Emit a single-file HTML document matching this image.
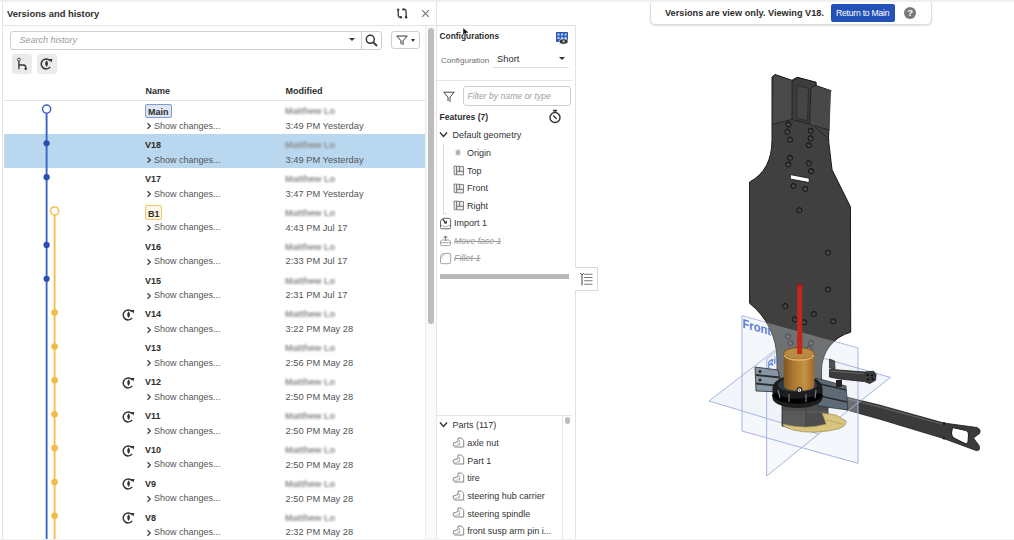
<!DOCTYPE html>
<html><head><meta charset="utf-8"><style>
html,body{margin:0;padding:0}
body{width:1014px;height:540px;overflow:hidden;position:relative;background:#fff;font-family:"Liberation Sans",sans-serif}
.t{position:absolute;white-space:nowrap;line-height:1}
svg{overflow:visible}
</style></head><body>
<div style="position:absolute;left:2.2px;top:1.5px;width:1.3px;height:538.5px;background:#e4e4e4"></div><div class="t" style="left:7px;top:9.24px;font-size:9.4px;font-weight:bold;color:#2e2e2e;font-style:normal;">Versions and history</div>
<svg style="position:absolute;left:396px;top:8px" width="13" height="12" viewBox="0 0 13 12"><path d="M2.2 1.6 V7.6 Q2.2 9.3 4 9.3 H4.8 M7.5 1.4 H8.4 Q10.1 1.4 10.1 3.2 V9.3" stroke="#333" stroke-width="1.3" fill="none"/><circle cx="2.2" cy="1.6" r="1.2" fill="#333"/><circle cx="4.9" cy="9.3" r="1.2" fill="#333"/><circle cx="7.5" cy="1.4" r="1.2" fill="#333"/><circle cx="10.1" cy="9.3" r="1.2" fill="#333"/></svg><svg style="position:absolute;left:421px;top:9.3px" width="9" height="9" viewBox="0 0 9 9"><path d="M1.2 1.2 L7.8 7.8 M7.8 1.2 L1.2 7.8" stroke="#777" stroke-width="1.2"/></svg><div style="position:absolute;left:3px;top:25px;width:433px;height:1px;background:#e4e4e4"></div><div style="position:absolute;left:436px;top:2px;width:1px;height:538px;background:#e4e4e4"></div><div style="position:absolute;left:10px;top:30.5px;width:370px;height:17px;border:1px solid #cfcfcf;border-radius:3px;background:#fff"></div><div class="t" style="left:19.5px;top:35.68px;font-size:9px;font-weight:normal;color:#9a9a9a;font-style:italic;">Search history</div>
<div style="position:absolute;left:349px;top:37.5px;width:0;height:0;border-left:3px solid transparent;border-right:3px solid transparent;border-top:3.5px solid #333"></div><div style="position:absolute;left:361px;top:31px;width:1px;height:18px;background:#d0d0d0"></div><svg style="position:absolute;left:365px;top:34px" width="13" height="13" viewBox="0 0 13 13"><circle cx="5.3" cy="5.3" r="4" stroke="#333" stroke-width="1.5" fill="none"/><path d="M8.2 8.2 L12 12" stroke="#333" stroke-width="1.8"/></svg><div style="position:absolute;left:391px;top:30.5px;width:27px;height:16.5px;border:1px solid #cfcfcf;border-radius:3px;background:#fff"></div><svg style="position:absolute;left:396px;top:34.5px" width="12" height="11" viewBox="0 0 12 11"><path d="M0.8 1 H11.2 L7 5.8 V10 M0.8 1 L5 5.8 V9.2" stroke="#333" stroke-width="1" fill="none" stroke-linejoin="round"/></svg><div style="position:absolute;left:411px;top:38.5px;width:0;height:0;border-left:2.8px solid transparent;border-right:2.8px solid transparent;border-top:3.2px solid #333"></div><div style="position:absolute;left:12px;top:54px;width:20px;height:20px;border-radius:3px;background:#ebebeb"></div><div style="position:absolute;left:36.5px;top:54px;width:20px;height:20px;border-radius:3px;background:#ebebeb"></div><svg style="position:absolute;left:15px;top:57px" width="14" height="14" viewBox="0 0 14 14"><circle cx="3.9" cy="2.6" r="1.5" stroke="#333" stroke-width="0.9" fill="none"/><path d="M3.9 4.1 V12.3 M3.9 8 H8.6 Q10.7 8 10.7 10.3 V11.5" stroke="#333" stroke-width="1.3" fill="none"/><circle cx="10.7" cy="11.8" r="1.25" fill="#333"/></svg><svg style="position:absolute;left:39.5px;top:57.3px" width="13" height="13" viewBox="0 0 13 13"><path d="M10.2 3.9 A5 5 0 1 0 10.2 9.9" stroke="#333" stroke-width="1.5" fill="none"/><path d="M8.8 2 L12.3 1.9 L11.6 5.4 Z" fill="#333"/><path d="M6.6 3.3 Q9.4 6.6 6.6 10.1 Q3.8 6.6 6.6 3.3 Z" fill="#333"/></svg><div class="t" style="left:145.4px;top:86.68px;font-size:9px;font-weight:bold;color:#2e2e2e;font-style:normal;">Name</div>
<div class="t" style="left:285.5px;top:86.68px;font-size:9px;font-weight:bold;color:#2e2e2e;font-style:normal;">Modified</div>
<div style="position:absolute;left:4px;top:100px;width:422px;height:1px;background:#e2e2e2"></div><div style="position:absolute;left:145px;top:103.8px;width:24.5px;height:12.5px;border:1px solid #7d9bd6;background:#dfe6f2;border-radius:2px"></div><div class="t" style="left:148px;top:107.98px;font-size:9px;font-weight:bold;color:#2e2e2e;font-style:normal;">Main</div>
<svg style="position:absolute;left:145.5px;top:122.3px" width="6" height="8" viewBox="0 0 6 8"><path d="M1.5 1.2 L4.3 4 L1.5 6.8" stroke="#444" stroke-width="1.3" fill="none"/></svg><div class="t" style="left:154px;top:121.78px;font-size:9px;font-weight:normal;color:#555;font-style:normal;">Show changes...</div>
<div class="t" style="left:285px;top:107.23px;font-size:9.3px;font-weight:bold;color:#8c8c8c;font-style:normal;filter:blur(1.25px);letter-spacing:-0.1px;">Matthew Lo</div>
<div class="t" style="left:285.5px;top:121.93px;font-size:9.3px;font-weight:normal;color:#555;font-style:normal;">3:49 PM Yesterday</div>
<div style="position:absolute;left:4px;top:134.36999999999998px;width:422px;height:33.5px;background:#b9d8f0"></div><div class="t" style="left:145px;top:141.05px;font-size:9px;font-weight:bold;color:#2e2e2e;font-style:normal;">V18</div>
<svg style="position:absolute;left:145.5px;top:156.17px" width="6" height="8" viewBox="0 0 6 8"><path d="M1.5 1.2 L4.3 4 L1.5 6.8" stroke="#444" stroke-width="1.3" fill="none"/></svg><div class="t" style="left:154px;top:155.65px;font-size:9px;font-weight:normal;color:#555;font-style:normal;">Show changes...</div>
<div class="t" style="left:285px;top:141.10px;font-size:9.3px;font-weight:bold;color:#8c8c8c;font-style:normal;filter:blur(1.25px);letter-spacing:-0.1px;">Matthew Lo</div>
<div class="t" style="left:285.5px;top:155.80px;font-size:9.3px;font-weight:normal;color:#555;font-style:normal;">3:49 PM Yesterday</div>
<div class="t" style="left:145px;top:174.92px;font-size:9px;font-weight:bold;color:#2e2e2e;font-style:normal;">V17</div>
<svg style="position:absolute;left:145.5px;top:190.04px" width="6" height="8" viewBox="0 0 6 8"><path d="M1.5 1.2 L4.3 4 L1.5 6.8" stroke="#444" stroke-width="1.3" fill="none"/></svg><div class="t" style="left:154px;top:189.52px;font-size:9px;font-weight:normal;color:#555;font-style:normal;">Show changes...</div>
<div class="t" style="left:285px;top:174.97px;font-size:9.3px;font-weight:bold;color:#8c8c8c;font-style:normal;filter:blur(1.25px);letter-spacing:-0.1px;">Matthew Lo</div>
<div class="t" style="left:285.5px;top:189.67px;font-size:9.3px;font-weight:normal;color:#555;font-style:normal;">3:47 PM Yesterday</div>
<div style="position:absolute;left:145px;top:205.41px;width:14.5px;height:12.5px;border:1px solid #f2c96a;background:#fdf6e4;border-radius:2px"></div><div class="t" style="left:148px;top:209.59px;font-size:9px;font-weight:bold;color:#2e2e2e;font-style:normal;">B1</div>
<svg style="position:absolute;left:145.5px;top:223.91px" width="6" height="8" viewBox="0 0 6 8"><path d="M1.5 1.2 L4.3 4 L1.5 6.8" stroke="#444" stroke-width="1.3" fill="none"/></svg><div class="t" style="left:154px;top:223.39px;font-size:9px;font-weight:normal;color:#555;font-style:normal;">Show changes...</div>
<div class="t" style="left:285px;top:208.84px;font-size:9.3px;font-weight:bold;color:#8c8c8c;font-style:normal;filter:blur(1.25px);letter-spacing:-0.1px;">Matthew Lo</div>
<div class="t" style="left:285.5px;top:223.54px;font-size:9.3px;font-weight:normal;color:#555;font-style:normal;">4:43 PM Jul 17</div>
<div class="t" style="left:145px;top:242.66px;font-size:9px;font-weight:bold;color:#2e2e2e;font-style:normal;">V16</div>
<svg style="position:absolute;left:145.5px;top:257.78px" width="6" height="8" viewBox="0 0 6 8"><path d="M1.5 1.2 L4.3 4 L1.5 6.8" stroke="#444" stroke-width="1.3" fill="none"/></svg><div class="t" style="left:154px;top:257.26px;font-size:9px;font-weight:normal;color:#555;font-style:normal;">Show changes...</div>
<div class="t" style="left:285px;top:242.71px;font-size:9.3px;font-weight:bold;color:#8c8c8c;font-style:normal;filter:blur(1.25px);letter-spacing:-0.1px;">Matthew Lo</div>
<div class="t" style="left:285.5px;top:257.41px;font-size:9.3px;font-weight:normal;color:#555;font-style:normal;">2:33 PM Jul 17</div>
<div class="t" style="left:145px;top:276.53px;font-size:9px;font-weight:bold;color:#2e2e2e;font-style:normal;">V15</div>
<svg style="position:absolute;left:145.5px;top:291.65px" width="6" height="8" viewBox="0 0 6 8"><path d="M1.5 1.2 L4.3 4 L1.5 6.8" stroke="#444" stroke-width="1.3" fill="none"/></svg><div class="t" style="left:154px;top:291.13px;font-size:9px;font-weight:normal;color:#555;font-style:normal;">Show changes...</div>
<div class="t" style="left:285px;top:276.58px;font-size:9.3px;font-weight:bold;color:#8c8c8c;font-style:normal;filter:blur(1.25px);letter-spacing:-0.1px;">Matthew Lo</div>
<div class="t" style="left:285.5px;top:291.28px;font-size:9.3px;font-weight:normal;color:#555;font-style:normal;">2:31 PM Jul 17</div>
<div class="t" style="left:145px;top:310.40px;font-size:9px;font-weight:bold;color:#2e2e2e;font-style:normal;">V14</div>
<svg style="position:absolute;left:145.5px;top:325.52px" width="6" height="8" viewBox="0 0 6 8"><path d="M1.5 1.2 L4.3 4 L1.5 6.8" stroke="#444" stroke-width="1.3" fill="none"/></svg><div class="t" style="left:154px;top:325.00px;font-size:9px;font-weight:normal;color:#555;font-style:normal;">Show changes...</div>
<div class="t" style="left:285px;top:310.45px;font-size:9.3px;font-weight:bold;color:#8c8c8c;font-style:normal;filter:blur(1.25px);letter-spacing:-0.1px;">Matthew Lo</div>
<div class="t" style="left:285.5px;top:325.15px;font-size:9.3px;font-weight:normal;color:#555;font-style:normal;">3:22 PM May 28</div>
<svg style="position:absolute;left:121.5px;top:308.02px" width="13" height="13" viewBox="0 0 13 13"><path d="M10.2 3.9 A5 5 0 1 0 10.2 9.9" stroke="#333" stroke-width="1.5" fill="none"/><path d="M8.8 2 L12.3 1.9 L11.6 5.4 Z" fill="#333"/><path d="M6.6 3.3 Q9.4 6.6 6.6 10.1 Q3.8 6.6 6.6 3.3 Z" fill="#333"/></svg><div class="t" style="left:145px;top:344.27px;font-size:9px;font-weight:bold;color:#2e2e2e;font-style:normal;">V13</div>
<svg style="position:absolute;left:145.5px;top:359.39px" width="6" height="8" viewBox="0 0 6 8"><path d="M1.5 1.2 L4.3 4 L1.5 6.8" stroke="#444" stroke-width="1.3" fill="none"/></svg><div class="t" style="left:154px;top:358.87px;font-size:9px;font-weight:normal;color:#555;font-style:normal;">Show changes...</div>
<div class="t" style="left:285px;top:344.32px;font-size:9.3px;font-weight:bold;color:#8c8c8c;font-style:normal;filter:blur(1.25px);letter-spacing:-0.1px;">Matthew Lo</div>
<div class="t" style="left:285.5px;top:359.02px;font-size:9.3px;font-weight:normal;color:#555;font-style:normal;">2:56 PM May 28</div>
<div class="t" style="left:145px;top:378.14px;font-size:9px;font-weight:bold;color:#2e2e2e;font-style:normal;">V12</div>
<svg style="position:absolute;left:145.5px;top:393.26px" width="6" height="8" viewBox="0 0 6 8"><path d="M1.5 1.2 L4.3 4 L1.5 6.8" stroke="#444" stroke-width="1.3" fill="none"/></svg><div class="t" style="left:154px;top:392.74px;font-size:9px;font-weight:normal;color:#555;font-style:normal;">Show changes...</div>
<div class="t" style="left:285px;top:378.19px;font-size:9.3px;font-weight:bold;color:#8c8c8c;font-style:normal;filter:blur(1.25px);letter-spacing:-0.1px;">Matthew Lo</div>
<div class="t" style="left:285.5px;top:392.89px;font-size:9.3px;font-weight:normal;color:#555;font-style:normal;">2:50 PM May 28</div>
<svg style="position:absolute;left:121.5px;top:375.76px" width="13" height="13" viewBox="0 0 13 13"><path d="M10.2 3.9 A5 5 0 1 0 10.2 9.9" stroke="#333" stroke-width="1.5" fill="none"/><path d="M8.8 2 L12.3 1.9 L11.6 5.4 Z" fill="#333"/><path d="M6.6 3.3 Q9.4 6.6 6.6 10.1 Q3.8 6.6 6.6 3.3 Z" fill="#333"/></svg><div class="t" style="left:145px;top:412.01px;font-size:9px;font-weight:bold;color:#2e2e2e;font-style:normal;">V11</div>
<svg style="position:absolute;left:145.5px;top:427.13px" width="6" height="8" viewBox="0 0 6 8"><path d="M1.5 1.2 L4.3 4 L1.5 6.8" stroke="#444" stroke-width="1.3" fill="none"/></svg><div class="t" style="left:154px;top:426.61px;font-size:9px;font-weight:normal;color:#555;font-style:normal;">Show changes...</div>
<div class="t" style="left:285px;top:412.06px;font-size:9.3px;font-weight:bold;color:#8c8c8c;font-style:normal;filter:blur(1.25px);letter-spacing:-0.1px;">Matthew Lo</div>
<div class="t" style="left:285.5px;top:426.76px;font-size:9.3px;font-weight:normal;color:#555;font-style:normal;">2:50 PM May 28</div>
<svg style="position:absolute;left:121.5px;top:409.63px" width="13" height="13" viewBox="0 0 13 13"><path d="M10.2 3.9 A5 5 0 1 0 10.2 9.9" stroke="#333" stroke-width="1.5" fill="none"/><path d="M8.8 2 L12.3 1.9 L11.6 5.4 Z" fill="#333"/><path d="M6.6 3.3 Q9.4 6.6 6.6 10.1 Q3.8 6.6 6.6 3.3 Z" fill="#333"/></svg><div class="t" style="left:145px;top:445.88px;font-size:9px;font-weight:bold;color:#2e2e2e;font-style:normal;">V10</div>
<svg style="position:absolute;left:145.5px;top:461.0px" width="6" height="8" viewBox="0 0 6 8"><path d="M1.5 1.2 L4.3 4 L1.5 6.8" stroke="#444" stroke-width="1.3" fill="none"/></svg><div class="t" style="left:154px;top:460.48px;font-size:9px;font-weight:normal;color:#555;font-style:normal;">Show changes...</div>
<div class="t" style="left:285px;top:445.93px;font-size:9.3px;font-weight:bold;color:#8c8c8c;font-style:normal;filter:blur(1.25px);letter-spacing:-0.1px;">Matthew Lo</div>
<div class="t" style="left:285.5px;top:460.63px;font-size:9.3px;font-weight:normal;color:#555;font-style:normal;">2:50 PM May 28</div>
<svg style="position:absolute;left:121.5px;top:443.5px" width="13" height="13" viewBox="0 0 13 13"><path d="M10.2 3.9 A5 5 0 1 0 10.2 9.9" stroke="#333" stroke-width="1.5" fill="none"/><path d="M8.8 2 L12.3 1.9 L11.6 5.4 Z" fill="#333"/><path d="M6.6 3.3 Q9.4 6.6 6.6 10.1 Q3.8 6.6 6.6 3.3 Z" fill="#333"/></svg><div class="t" style="left:145px;top:479.75px;font-size:9px;font-weight:bold;color:#2e2e2e;font-style:normal;">V9</div>
<svg style="position:absolute;left:145.5px;top:494.87px" width="6" height="8" viewBox="0 0 6 8"><path d="M1.5 1.2 L4.3 4 L1.5 6.8" stroke="#444" stroke-width="1.3" fill="none"/></svg><div class="t" style="left:154px;top:494.35px;font-size:9px;font-weight:normal;color:#555;font-style:normal;">Show changes...</div>
<div class="t" style="left:285px;top:479.80px;font-size:9.3px;font-weight:bold;color:#8c8c8c;font-style:normal;filter:blur(1.25px);letter-spacing:-0.1px;">Matthew Lo</div>
<div class="t" style="left:285.5px;top:494.50px;font-size:9.3px;font-weight:normal;color:#555;font-style:normal;">2:50 PM May 28</div>
<svg style="position:absolute;left:121.5px;top:477.37px" width="13" height="13" viewBox="0 0 13 13"><path d="M10.2 3.9 A5 5 0 1 0 10.2 9.9" stroke="#333" stroke-width="1.5" fill="none"/><path d="M8.8 2 L12.3 1.9 L11.6 5.4 Z" fill="#333"/><path d="M6.6 3.3 Q9.4 6.6 6.6 10.1 Q3.8 6.6 6.6 3.3 Z" fill="#333"/></svg><div class="t" style="left:145px;top:513.62px;font-size:9px;font-weight:bold;color:#2e2e2e;font-style:normal;">V8</div>
<svg style="position:absolute;left:145.5px;top:528.74px" width="6" height="8" viewBox="0 0 6 8"><path d="M1.5 1.2 L4.3 4 L1.5 6.8" stroke="#444" stroke-width="1.3" fill="none"/></svg><div class="t" style="left:154px;top:528.22px;font-size:9px;font-weight:normal;color:#555;font-style:normal;">Show changes...</div>
<div class="t" style="left:285px;top:513.67px;font-size:9.3px;font-weight:bold;color:#8c8c8c;font-style:normal;filter:blur(1.25px);letter-spacing:-0.1px;">Matthew Lo</div>
<div class="t" style="left:285.5px;top:528.37px;font-size:9.3px;font-weight:normal;color:#555;font-style:normal;">2:32 PM May 28</div>
<svg style="position:absolute;left:121.5px;top:511.24px" width="13" height="13" viewBox="0 0 13 13"><path d="M10.2 3.9 A5 5 0 1 0 10.2 9.9" stroke="#333" stroke-width="1.5" fill="none"/><path d="M8.8 2 L12.3 1.9 L11.6 5.4 Z" fill="#333"/><path d="M6.6 3.3 Q9.4 6.6 6.6 10.1 Q3.8 6.6 6.6 3.3 Z" fill="#333"/></svg><svg style="position:absolute;left:0;top:0" width="80" height="540" viewBox="0 0 80 540"><path d="M46.6 113.5 V540" stroke="#3d63c6" stroke-width="1.9"/><path d="M54.6 215 V540" stroke="#f2c04e" stroke-width="1.9"/><circle cx="46.6" cy="109.1" r="4.1" stroke="#3d63c6" stroke-width="1.5" fill="#fff"/><circle cx="46.6" cy="143.27" r="3.1" fill="#2b4fb0"/><circle cx="46.6" cy="177.14" r="3.1" fill="#2b4fb0"/><circle cx="46.6" cy="244.88" r="3.1" fill="#2b4fb0"/><circle cx="46.6" cy="278.75" r="3.1" fill="#2b4fb0"/><circle cx="54.6" cy="211" r="4.1" stroke="#f2c04e" stroke-width="1.5" fill="#fff"/><circle cx="54.6" cy="312.62" r="3.3" fill="#f0bc45"/><circle cx="54.6" cy="346.49" r="3.3" fill="#f0bc45"/><circle cx="54.6" cy="380.36" r="3.3" fill="#f0bc45"/><circle cx="54.6" cy="414.23" r="3.3" fill="#f0bc45"/><circle cx="54.6" cy="448.1" r="3.3" fill="#f0bc45"/><circle cx="54.6" cy="481.97" r="3.3" fill="#f0bc45"/><circle cx="54.6" cy="515.84" r="3.3" fill="#f0bc45"/></svg><div style="position:absolute;left:425px;top:26px;width:10px;height:514px;background:#fafafa;border-left:1.2px solid #ededed;border-right:1.2px solid #e6e6e6"></div><div style="position:absolute;left:428.2px;top:28px;width:5.8px;height:296px;background:#bdbdbd;border-radius:3px"></div>
<div style="position:absolute;left:437px;top:25px;width:138px;height:520px;border-top:1px solid #e2e2e2;border-right:1px solid #e2e2e2;border-top-right-radius:2px"></div><div class="t" style="left:439.5px;top:32.39px;font-size:8.4px;font-weight:bold;color:#2e2e2e;font-style:normal;">Configurations</div>
<svg style="position:absolute;left:555px;top:30.8px" width="15" height="15" viewBox="0 0 15 15">
<rect x="1" y="1" width="12" height="10" rx="0.8" fill="#2c54b6"/>
<g fill="#a9d3f1"><rect x="2.4" y="2.4" width="2.2" height="2.2"/><rect x="5.9" y="2.4" width="2.2" height="2.2"/><rect x="9.5" y="2.4" width="2.2" height="2.2"/><rect x="2.4" y="5.9" width="2.2" height="2.2"/><rect x="5.9" y="5.9" width="2.2" height="2.2"/><rect x="9.5" y="5.9" width="2.2" height="2.2"/></g>
<ellipse cx="8.6" cy="10.5" rx="4.4" ry="2.7" fill="#3a3a3a" stroke="#fff" stroke-width="0.7"/><circle cx="8.6" cy="10.3" r="1.1" fill="#ccc"/></svg><div class="t" style="left:441px;top:56.64px;font-size:8.1px;font-weight:normal;color:#6e6e6e;font-style:normal;">Configuration</div>
<div class="t" style="left:497px;top:54.04px;font-size:9.4px;font-weight:normal;color:#2e2e2e;font-style:normal;">Short</div>
<div style="position:absolute;left:559px;top:56.5px;width:0;height:0;border-left:3px solid transparent;border-right:3px solid transparent;border-top:3.5px solid #333"></div><div style="position:absolute;left:493px;top:66.5px;width:76px;height:1px;background:#dedede"></div><div style="position:absolute;left:437px;top:80px;width:135px;height:1px;background:#e4e4e4"></div><svg style="position:absolute;left:443px;top:90.5px" width="12" height="12" viewBox="0 0 12 12"><path d="M0.8 1.2 H11.2 L7 6.2 V10.8 M0.8 1.2 L5 6.2 V10" stroke="#444" stroke-width="1" fill="none" stroke-linejoin="round"/></svg><div style="position:absolute;left:463px;top:85.5px;width:105.5px;height:18.5px;border:1px solid #cfcfcf;border-radius:3px"></div><div class="t" style="left:467.5px;top:91.68px;font-size:8.65px;font-weight:normal;color:#a0a0a0;font-style:italic;">Filter by name or type</div>
<div class="t" style="left:439.5px;top:112.52px;font-size:8.6px;font-weight:bold;color:#2e2e2e;font-style:normal;">Features (7)</div>
<svg style="position:absolute;left:548px;top:109.2px" width="14" height="15" viewBox="0 0 14 15"><circle cx="7" cy="8.5" r="5" stroke="#333" stroke-width="1.4" fill="none"/><path d="M5 1.5 H9 M7 1.5 V3.5 M5.3 6.6 L8.6 9.9" stroke="#333" stroke-width="1.4" fill="none"/></svg><svg style="position:absolute;left:438px;top:130px" width="12" height="10" viewBox="0 0 12 10"><path d="M2 2.5 L5.5 6.5 L9 2.5" stroke="#333" stroke-width="1.4" fill="none"/></svg><div class="t" style="left:452.6px;top:130.88px;font-size:9px;font-weight:normal;color:#333;font-style:normal;">Default geometry</div>
<div style="position:absolute;left:443px;top:144px;width:1px;height:69.5px;background:#dcdcdc"></div><div style="position:absolute;left:443px;top:213px;width:4px;height:1px;background:#dcdcdc"></div><div style="position:absolute;left:455.8px;top:150.3px;width:4.4px;height:4.4px;border-radius:50%;background:#a9b0b8;box-shadow:0 0 0 1px #e3e6ea"></div><div class="t" style="left:467px;top:148.98px;font-size:9px;font-weight:normal;color:#333;font-style:normal;">Origin</div>
<svg style="position:absolute;left:453.3px;top:165.1px" width="12" height="11" viewBox="0 0 12 11"><path d="M1 1 L10.5 1.6 V10 L1.3 9.6 Z" stroke="#777" stroke-width="0.9" fill="#ebebeb"/><path d="M3.6 1.2 V9.6 M3.6 6.3 H10.5 M6.6 1.4 V6.3" stroke="#666" stroke-width="0.9" fill="none"/></svg><div class="t" style="left:467px;top:166.58px;font-size:9px;font-weight:normal;color:#333;font-style:normal;">Top</div>
<svg style="position:absolute;left:453.3px;top:182.7px" width="12" height="11" viewBox="0 0 12 11"><path d="M1 1 L10.5 1.6 V10 L1.3 9.6 Z" stroke="#777" stroke-width="0.9" fill="#ebebeb"/><path d="M3.6 1.2 V9.6 M3.6 6.3 H10.5 M6.6 1.4 V6.3" stroke="#666" stroke-width="0.9" fill="none"/></svg><div class="t" style="left:467px;top:184.18px;font-size:9px;font-weight:normal;color:#333;font-style:normal;">Front</div>
<svg style="position:absolute;left:453.3px;top:200.39999999999998px" width="12" height="11" viewBox="0 0 12 11"><path d="M1 1 L10.5 1.6 V10 L1.3 9.6 Z" stroke="#777" stroke-width="0.9" fill="#ebebeb"/><path d="M3.6 1.2 V9.6 M3.6 6.3 H10.5 M6.6 1.4 V6.3" stroke="#666" stroke-width="0.9" fill="none"/></svg><div class="t" style="left:467px;top:201.88px;font-size:9px;font-weight:normal;color:#333;font-style:normal;">Right</div>
<svg style="position:absolute;left:439.3px;top:216.5px" width="13" height="13" viewBox="0 0 13 13"><path d="M1.5 4 L4 1.3 H10 Q11.6 1.3 11.6 2.9 V10.3 Q11.6 11.8 10 11.8 H3 Q1.5 11.8 1.5 10.3 Z" stroke="#555" stroke-width="0.9" fill="#fff"/><path d="M2 8.2 L6.5 10 L11.3 8" stroke="#888" stroke-width="0.7" fill="none"/><path d="M3.6 2.2 L6.4 5.4" stroke="#222" stroke-width="1.2"/><path d="M4.6 6.6 H7.8 V3.4 Z" fill="#222"/></svg><div class="t" style="left:454px;top:218.98px;font-size:9px;font-weight:normal;color:#333;font-style:normal;">Import 1</div>
<svg style="position:absolute;left:439.3px;top:234px" width="13" height="13" viewBox="0 0 13 13"><path d="M1.5 7 L3 6 H10 L11.6 7 V10.5 Q11.6 11.6 10.5 11.6 H2.6 Q1.5 11.6 1.5 10.5 Z M1.5 8.8 H11.6" stroke="#9a9a9a" stroke-width="0.9" fill="none"/><path d="M6.5 7 V2 M4.7 3.8 L6.5 2 L8.3 3.8" stroke="#888" stroke-width="1.1" fill="none"/></svg><div class="t" style="left:454px;top:236.94px;font-size:8.7px;font-weight:normal;color:#9a9a9a;font-style:italic;"><s>Move face 1</s></div>
<svg style="position:absolute;left:439.3px;top:251.8px" width="13" height="13" viewBox="0 0 13 13"><path d="M5.2 1.4 H10 Q11.6 1.4 11.6 3 V10.2 Q11.6 11.7 10 11.7 H3 Q1.5 11.7 1.5 10.2 V5.2 Q1.5 1.4 5.2 1.4 Z" stroke="#9a9a9a" stroke-width="0.9" fill="none"/><path d="M2.6 6.5 Q2.6 2.6 6.4 2.6" stroke="#bbb" stroke-width="0.8" fill="none"/></svg><div class="t" style="left:454px;top:254.18px;font-size:9px;font-weight:normal;color:#9a9a9a;font-style:italic;"><s>Fillet 1</s></div>
<div style="position:absolute;left:440px;top:273.5px;width:129px;height:5px;background:#b7b7b7"></div><div style="position:absolute;left:574.5px;top:266.5px;width:22px;height:22px;border:1px solid #d8d8d8;border-left:none;background:#fff"></div><svg style="position:absolute;left:578px;top:270px" width="18" height="18" viewBox="0 0 18 18"><path d="M2.2 3 L4 5 L5.8 3" stroke="#555" stroke-width="1" fill="none"/><path d="M4 5 V15.5" stroke="#666" stroke-width="1.2"/><path d="M6.2 4.2 H14.5 M6.2 7.5 H14.5 M6.2 10.8 H14.5 M6.2 14.2 H14.5" stroke="#777" stroke-width="1.1"/></svg><div style="position:absolute;left:437px;top:415px;width:135px;height:1px;background:#e4e4e4"></div><div style="position:absolute;left:562px;top:416px;width:1px;height:124px;background:#e6e6e6"></div><div style="position:absolute;left:564.5px;top:416.5px;width:5px;height:7px;border-radius:2.5px;background:#bcbcbc"></div><svg style="position:absolute;left:438px;top:420px" width="12" height="10" viewBox="0 0 12 10"><path d="M2 2.5 L5.5 6.5 L9 2.5" stroke="#333" stroke-width="1.4" fill="none"/></svg><div class="t" style="left:452.4px;top:421.08px;font-size:9px;font-weight:normal;color:#333;font-style:normal;">Parts (117)</div>
<svg style="position:absolute;left:452px;top:436.7px" width="13" height="12" viewBox="0 0 13 12"><path d="M6.3 1 H9.3 L11.7 3.3 V10 H2.7 L1.3 8.3 V6 L6 4.6 V1 Z" stroke="#777" stroke-width="0.9" fill="none" stroke-linejoin="round"/><path d="M6 6.4 L7.7 7.8 V3.2 M2.4 8.4 L7.7 7.8" stroke="#999" stroke-width="0.7" fill="none"/></svg><div class="t" style="left:467.2px;top:438.98px;font-size:9px;font-weight:normal;color:#333;font-style:normal;">axle nut</div>
<svg style="position:absolute;left:452px;top:454.34999999999997px" width="13" height="12" viewBox="0 0 13 12"><path d="M6.3 1 H9.3 L11.7 3.3 V10 H2.7 L1.3 8.3 V6 L6 4.6 V1 Z" stroke="#777" stroke-width="0.9" fill="none" stroke-linejoin="round"/><path d="M6 6.4 L7.7 7.8 V3.2 M2.4 8.4 L7.7 7.8" stroke="#999" stroke-width="0.7" fill="none"/></svg><div class="t" style="left:467.2px;top:456.63px;font-size:9px;font-weight:normal;color:#333;font-style:normal;">Part 1</div>
<svg style="position:absolute;left:452px;top:472.0px" width="13" height="12" viewBox="0 0 13 12"><path d="M6.3 1 H9.3 L11.7 3.3 V10 H2.7 L1.3 8.3 V6 L6 4.6 V1 Z" stroke="#777" stroke-width="0.9" fill="none" stroke-linejoin="round"/><path d="M6 6.4 L7.7 7.8 V3.2 M2.4 8.4 L7.7 7.8" stroke="#999" stroke-width="0.7" fill="none"/></svg><div class="t" style="left:467.2px;top:474.28px;font-size:9px;font-weight:normal;color:#333;font-style:normal;">tire</div>
<svg style="position:absolute;left:452px;top:489.65px" width="13" height="12" viewBox="0 0 13 12"><path d="M6.3 1 H9.3 L11.7 3.3 V10 H2.7 L1.3 8.3 V6 L6 4.6 V1 Z" stroke="#777" stroke-width="0.9" fill="none" stroke-linejoin="round"/><path d="M6 6.4 L7.7 7.8 V3.2 M2.4 8.4 L7.7 7.8" stroke="#999" stroke-width="0.7" fill="none"/></svg><div class="t" style="left:467.2px;top:491.93px;font-size:9px;font-weight:normal;color:#333;font-style:normal;">steering hub carrier</div>
<svg style="position:absolute;left:452px;top:507.29999999999995px" width="13" height="12" viewBox="0 0 13 12"><path d="M6.3 1 H9.3 L11.7 3.3 V10 H2.7 L1.3 8.3 V6 L6 4.6 V1 Z" stroke="#777" stroke-width="0.9" fill="none" stroke-linejoin="round"/><path d="M6 6.4 L7.7 7.8 V3.2 M2.4 8.4 L7.7 7.8" stroke="#999" stroke-width="0.7" fill="none"/></svg><div class="t" style="left:467.2px;top:509.58px;font-size:9px;font-weight:normal;color:#333;font-style:normal;">steering spindle</div>
<svg style="position:absolute;left:452px;top:524.9499999999999px" width="13" height="12" viewBox="0 0 13 12"><path d="M6.3 1 H9.3 L11.7 3.3 V10 H2.7 L1.3 8.3 V6 L6 4.6 V1 Z" stroke="#777" stroke-width="0.9" fill="none" stroke-linejoin="round"/><path d="M6 6.4 L7.7 7.8 V3.2 M2.4 8.4 L7.7 7.8" stroke="#999" stroke-width="0.7" fill="none"/></svg><div class="t" style="left:467.2px;top:527.23px;font-size:9px;font-weight:normal;color:#333;font-style:normal;">front susp arm pin i...</div>

<svg style="position:absolute;left:0;top:0" width="1014" height="540" viewBox="0 0 1014 540">
<defs>
<linearGradient id="motor" x1="0" x2="1" y1="0" y2="0">
<stop offset="0" stop-color="#7e5620"/><stop offset="0.3" stop-color="#a9772f"/><stop offset="0.68" stop-color="#c49244"/><stop offset="1" stop-color="#9c6a2a"/>
</linearGradient>
</defs>
<!-- plane fills -->
<path d="M709 401 L780.5 346 L890.4 377.4 L818.5 434 Z" fill="#eef2f9" fill-opacity="0.75"/>
<path d="M742 315.7 L858 348 L858 463.3 L742 431 Z" fill="#eef2f9" fill-opacity="0.6"/>
<path d="M766.7 359 L766.7 476 L818.5 434 L818.5 318 Z" fill="#eef2f9" fill-opacity="0.5"/>

<!-- long arm -->
<path d="M836 394.5 L880 405.2 L943.8 423 L977 427.5 Q981.5 429.5 979.5 433.5 L973.5 438 L979 445.5 Q981 451 976 450.5 L943.8 438.6 L880 419.3 L836 407 Z" fill="#3b3b3b" stroke="#1a1a1a" stroke-width="0.8"/>
<path d="M838 396.5 L880 407 L943.8 424.6" stroke="#5a5a5a" stroke-width="1.4" fill="none"/>
<path d="M952.5 427.5 L966 430.5 Q969 431.5 968.5 435 L968 441.5 Q967.5 444.5 964 443 L954 438 Q951.5 436.5 951.5 433 Z" fill="#fff" stroke="#1a1a1a" stroke-width="1"/>
<circle cx="944" cy="423.5" r="1.6" fill="#222"/><circle cx="944" cy="438" r="1.6" fill="#222"/>
<!-- front plane top edge (behind chassis) -->
<path d="M742 315.7 L858 348" stroke="#a3b5de" stroke-width="1" fill="none"/>
<!-- chassis -->
<path d="M775 74.5 L792 80.3 L797 77.3 L816 82.3 L816 85.5 L831 90.7 L829.8 94 L828.5 140 L832 169.6 L850.4 206.7 L850.7 332.2 A39 39 0 0 0 821.5 370 L821.5 395 L777 395 L777 360 A72 72 0 0 0 749.6 303.3 L749.6 182 Q772 170 772 140 L772 77 Z" fill="#404040" stroke="#1a1a1a" stroke-width="1"/>
<path d="M774 76 L792 81 L792 119.5 L773 123.5 Z" fill="#4a4a4a"/>
<path d="M816 86 L831 91 L829.5 130 L809.6 124.5 L811 88 Z" fill="#484848"/>
<path d="M797 77.3 L816 82.3 L816 85.5 L811 88 L809.6 124 L792 119.5 L792 82 Z" fill="#3c3c3c" stroke="#1c1c1c" stroke-width="0.8"/>
<path d="M797 85.5 L808.5 88.5 L807.5 121 L796.5 118 Z" fill="#454545" stroke="#222" stroke-width="0.6"/>
<path d="M772.5 124 L792 119.5 M809.6 124.5 L829.5 130 M815 127 L829.5 140" stroke="#202020" stroke-width="0.8" fill="none"/>
<path d="M790.3 174.6 L809.2 178.2 L809.2 182.6 L790.3 179 Z" fill="#fff" stroke="#1a1a1a" stroke-width="0.9"/>
<circle cx="788.4" cy="124.4" r="2.6" fill="#363636" stroke="#121212" stroke-width="0.9"/><path d="M786.9 123.9 Q788.1999999999999 125.9 789.9 125.2" stroke="#777" stroke-width="0.7" fill="none"/><circle cx="787.3" cy="131.6" r="2.6" fill="#363636" stroke="#121212" stroke-width="0.9"/><path d="M785.8 131.1 Q787.0999999999999 133.1 788.8 132.4" stroke="#777" stroke-width="0.7" fill="none"/><circle cx="790" cy="139.6" r="2.6" fill="#363636" stroke="#121212" stroke-width="0.9"/><path d="M788.5 139.1 Q789.8 141.1 791.5 140.4" stroke="#777" stroke-width="0.7" fill="none"/><circle cx="810.7" cy="130.7" r="2.6" fill="#363636" stroke="#121212" stroke-width="0.9"/><path d="M809.2 130.2 Q810.5 132.2 812.2 131.5" stroke="#777" stroke-width="0.7" fill="none"/><circle cx="810.7" cy="138.2" r="2.6" fill="#363636" stroke="#121212" stroke-width="0.9"/><path d="M809.2 137.7 Q810.5 139.7 812.2 139.0" stroke="#777" stroke-width="0.7" fill="none"/><circle cx="808.9" cy="145.1" r="2.6" fill="#363636" stroke="#121212" stroke-width="0.9"/><path d="M807.4 144.6 Q808.6999999999999 146.6 810.4 145.9" stroke="#777" stroke-width="0.7" fill="none"/><circle cx="790" cy="157.8" r="2.6" fill="#363636" stroke="#121212" stroke-width="0.9"/><path d="M788.5 157.3 Q789.8 159.3 791.5 158.60000000000002" stroke="#777" stroke-width="0.7" fill="none"/><circle cx="788.4" cy="164.4" r="2.6" fill="#363636" stroke="#121212" stroke-width="0.9"/><path d="M786.9 163.9 Q788.1999999999999 165.9 789.9 165.20000000000002" stroke="#777" stroke-width="0.7" fill="none"/><circle cx="808.9" cy="163.3" r="2.6" fill="#363636" stroke="#121212" stroke-width="0.9"/><path d="M807.4 162.8 Q808.6999999999999 164.8 810.4 164.10000000000002" stroke="#777" stroke-width="0.7" fill="none"/><circle cx="811.1" cy="171.1" r="2.6" fill="#363636" stroke="#121212" stroke-width="0.9"/><path d="M809.6 170.6 Q810.9 172.6 812.6 171.9" stroke="#777" stroke-width="0.7" fill="none"/><circle cx="793.5" cy="185.9" r="2.6" fill="#363636" stroke="#121212" stroke-width="0.9"/><path d="M792.0 185.4 Q793.3 187.4 795.0 186.70000000000002" stroke="#777" stroke-width="0.7" fill="none"/><circle cx="805.3" cy="188.9" r="2.6" fill="#363636" stroke="#121212" stroke-width="0.9"/><path d="M803.8 188.4 Q805.0999999999999 190.4 806.8 189.70000000000002" stroke="#777" stroke-width="0.7" fill="none"/><circle cx="799.4" cy="210.2" r="2.6" fill="#363636" stroke="#121212" stroke-width="0.9"/><path d="M797.9 209.7 Q799.1999999999999 211.7 800.9 211.0" stroke="#777" stroke-width="0.7" fill="none"/><circle cx="828.1" cy="252.6" r="2.6" fill="#363636" stroke="#121212" stroke-width="0.9"/><path d="M826.6 252.1 Q827.9 254.1 829.6 253.4" stroke="#777" stroke-width="0.7" fill="none"/><circle cx="828.1" cy="289.4" r="2.6" fill="#363636" stroke="#121212" stroke-width="0.9"/><path d="M826.6 288.9 Q827.9 290.9 829.6 290.2" stroke="#777" stroke-width="0.7" fill="none"/><circle cx="785.2" cy="306" r="2.6" fill="#363636" stroke="#121212" stroke-width="0.9"/><path d="M783.7 305.5 Q785.0 307.5 786.7 306.8" stroke="#777" stroke-width="0.7" fill="none"/><circle cx="813.8" cy="314" r="2.6" fill="#363636" stroke="#121212" stroke-width="0.9"/><path d="M812.3 313.5 Q813.5999999999999 315.5 815.3 314.8" stroke="#777" stroke-width="0.7" fill="none"/><circle cx="794.8" cy="319.3" r="2.6" fill="#363636" stroke="#121212" stroke-width="0.9"/><path d="M793.3 318.8 Q794.5999999999999 320.8 796.3 320.1" stroke="#777" stroke-width="0.7" fill="none"/><circle cx="804" cy="322.2" r="2.6" fill="#363636" stroke="#121212" stroke-width="0.9"/><path d="M802.5 321.7 Q803.8 323.7 805.5 323.0" stroke="#777" stroke-width="0.7" fill="none"/><circle cx="833.3" cy="321.2" r="2.6" fill="#363636" stroke="#121212" stroke-width="0.9"/><path d="M831.8 320.7 Q833.0999999999999 322.7 834.8 322.0" stroke="#777" stroke-width="0.7" fill="none"/><circle cx="788.1" cy="336.3" r="2.6" fill="#363636" stroke="#121212" stroke-width="0.9"/><path d="M786.6 335.8 Q787.9 337.8 789.6 337.1" stroke="#777" stroke-width="0.7" fill="none"/><circle cx="790.4" cy="343" r="2.6" fill="#363636" stroke="#121212" stroke-width="0.9"/><path d="M788.9 342.5 Q790.1999999999999 344.5 791.9 343.8" stroke="#777" stroke-width="0.7" fill="none"/><circle cx="811.1" cy="343" r="2.6" fill="#363636" stroke="#121212" stroke-width="0.9"/><path d="M809.6 342.5 Q810.9 344.5 812.6 343.8" stroke="#777" stroke-width="0.7" fill="none"/><circle cx="809.3" cy="348.4" r="2.6" fill="#363636" stroke="#121212" stroke-width="0.9"/><path d="M807.8 347.9 Q809.0999999999999 349.9 810.8 349.2" stroke="#777" stroke-width="0.7" fill="none"/>
<!-- front plane overlay -->
<path d="M742 315.7 L858 348 L858 463.3 L742 431 Z" fill="#f4f6fb" fill-opacity="0.27"/>
<clipPath id="fclip"><path d="M700 290 L749.6 290 L749.6 303.3 A72 72 0 0 1 777 360 L700 360 Z M760 300 H769 V340 H760 Z"/></clipPath>
<g clip-path="url(#fclip)"><text transform="matrix(1 0.28 0 1 742.5 327.5)" font-family="Liberation Sans" font-size="12.5" font-weight="bold" fill="#5a7ed3" textLength="28.5" lengthAdjust="spacingAndGlyphs">Front</text></g>
<clipPath id="rclip"><path d="M700 290 L749.6 290 L749.6 303.3 A72 72 0 0 1 777 360 L777 400 L700 400 Z"/></clipPath><g clip-path="url(#rclip)"><text transform="matrix(0.79 -0.62 0 1 767.5 369.5)" font-family="Liberation Sans" font-size="10.5" font-weight="bold" fill="#5d80d2">Right</text></g>
<!-- plane outlines -->
<g fill="none" stroke="#a3b5de" stroke-width="1">
<path d="M858 348 L858 463.3 L742 431 L742 315.7"/>
<path d="M776 349.5 L709 401 L818.5 434 L890.4 377.4 L824 358.4"/>
<path d="M776 351.5 L766.7 359 L766.7 476 L818.5 434"/>
</g>
<!-- upper short arm -->
<path d="M829.5 369.3 L864.5 372 L873.6 371.2 L876.1 374.5 L875.5 380.3 L869.7 383.5 L864.5 381.6 L839.8 379 L829.5 377 Z" fill="#3c3c3c" stroke="#1c1c1c" stroke-width="0.8"/>
<path d="M830 370.8 L864 373.6" stroke="#5e5e5e" stroke-width="1.2"/>
<circle cx="867.5" cy="375" r="1.2" fill="#111"/><circle cx="872" cy="375.5" r="1.2" fill="#111"/><circle cx="868" cy="379.5" r="1.2" fill="#111"/><circle cx="872.5" cy="379" r="1.2" fill="#111"/>
<path d="M829.5 359 L834.6 361 L835 369 L829.5 368 Z" fill="#505050" stroke="#222" stroke-width="0.7"/>
<!-- red rod -->
<rect x="797.2" y="285" width="5" height="70" fill="#c0281e"/>
<ellipse cx="799.7" cy="285" rx="3.2" ry="1.4" fill="#9a1c14"/>
<!-- left bracket -->
<path d="M755 367 L778 370 L782 392 L756 391 Z" fill="#8796a5" stroke="#2a2a2a" stroke-width="0.8"/>
<path d="M756 375 L780 377.5 M756 383.5 L781 386" stroke="#2c2c2c" stroke-width="1.8"/>
<circle cx="760" cy="371.5" r="1.5" fill="#222"/><circle cx="760" cy="380" r="1.5" fill="#222"/>
<!-- lower block -->
<path d="M782 400 L828 400 L828 426 Q806 433 782 426 Z" fill="#4e4e50" stroke="#262626" stroke-width="0.8"/>
<path d="M782 412 L828 412" stroke="#6a6a6a" stroke-width="0.8"/><path d="M783 413 L805 413 L805 428 Q794 427 783 425 Z" fill="#5a5a5c"/>
<path d="M806 401 L806 430" stroke="#444" stroke-width="0.8"/>

<!-- tan piece -->
<path d="M783 426 Q800 435 828 431 L838 429 Q847 426 846 421 L836 415 L822 413 L826 424 Q806 430 783 424 Z" fill="#d9c47e" stroke="#8e7d45" stroke-width="0.6"/>
<path d="M826 420 L842 424" stroke="#a99a5a" stroke-width="0.7"/>
<!-- right bracket -->
<path d="M816 378 L846 386 L848 410 L818 406 Z" fill="#5d6a77" stroke="#2a2a2a" stroke-width="0.7"/>
<path d="M820 384 L846 390 M820 396 L847 402" stroke="#2a2a2a" stroke-width="1.6"/>
<rect x="836" y="380" width="6" height="7" fill="#222"/>
<!-- ring -->
<path d="M772.5 388 A25 13 0 0 1 822.5 388 L822.5 398 A25 10 0 0 1 772.5 398 Z" fill="#1c1c1c"/>
<path d="M774 394 A24 9 0 0 0 821 394" stroke="#000" stroke-width="5" fill="none"/>
<ellipse cx="797.5" cy="385" rx="19.5" ry="7" fill="#2e3846"/>
<path d="M778 390 L780 398 M789 394 L789 402 M806 394 L806 402 M816 390 L815 398" stroke="#6b7b8b" stroke-width="1.2"/>
<!-- motor -->
<path d="M783.8 354 L783.8 386 A15.25 5 0 0 0 814.3 386 L814.3 354 Z" fill="url(#motor)"/>
<ellipse cx="799" cy="353.5" rx="15.25" ry="6" fill="#b88a42" stroke="#6e4a18" stroke-width="0.8"/><path d="M784.5 355 A14.5 5 0 0 0 813.5 355" stroke="#e2b868" stroke-width="1.3" fill="none"/>
<rect x="797.2" y="335" width="5" height="19" fill="#c0281e"/>
<circle cx="799.4" cy="390" r="2.4" fill="#fff" stroke="#1a1a1a" stroke-width="1.1"/><circle cx="799.4" cy="390" r="0.8" fill="#333"/>
</svg>
<div style="position:absolute;left:650px;top:-4px;width:280px;height:26.5px;border:1px solid #dedede;border-radius:5px;background:#fff;box-shadow:0 1px 2px rgba(0,0,0,0.12)"></div><div class="t" style="left:665px;top:8.51px;font-size:9.2px;font-weight:bold;color:#2e2e2e;font-style:normal;">Versions are view only. Viewing V18.</div>
<div style="position:absolute;left:830.5px;top:3.6px;width:64px;height:18.3px;background:#2451b7;border-radius:2px"></div><div class="t" style="left:836px;top:9.04px;font-size:8.7px;font-weight:normal;color:#fff;font-style:normal;letter-spacing:-0.26px;">Return to Main</div>
<div style="position:absolute;left:904.3px;top:6.8px;width:12px;height:12px;border-radius:50%;background:#787878"></div><div class="t" style="left:907.2px;top:8.26px;font-size:9.5px;font-weight:bold;color:#fff;font-style:normal;">?</div>

<div style="position:absolute;left:0;top:0;width:1014px;height:1.5px;background:#efefef"></div>
<div style="position:absolute;left:0;top:538.5px;width:1014px;height:1.5px;background:#f1f1f1"></div>
<svg style="position:absolute;left:0;top:0" width="1014" height="540" viewBox="0 0 1014 540"><path d="M463 27.8 L463 35.2 L464.9 33.4 L466.3 36.6 L467.6 36 L466.2 32.9 L468.9 32.8 Z" fill="#111" stroke="#fff" stroke-width="0.5"/></svg>
</body></html>
